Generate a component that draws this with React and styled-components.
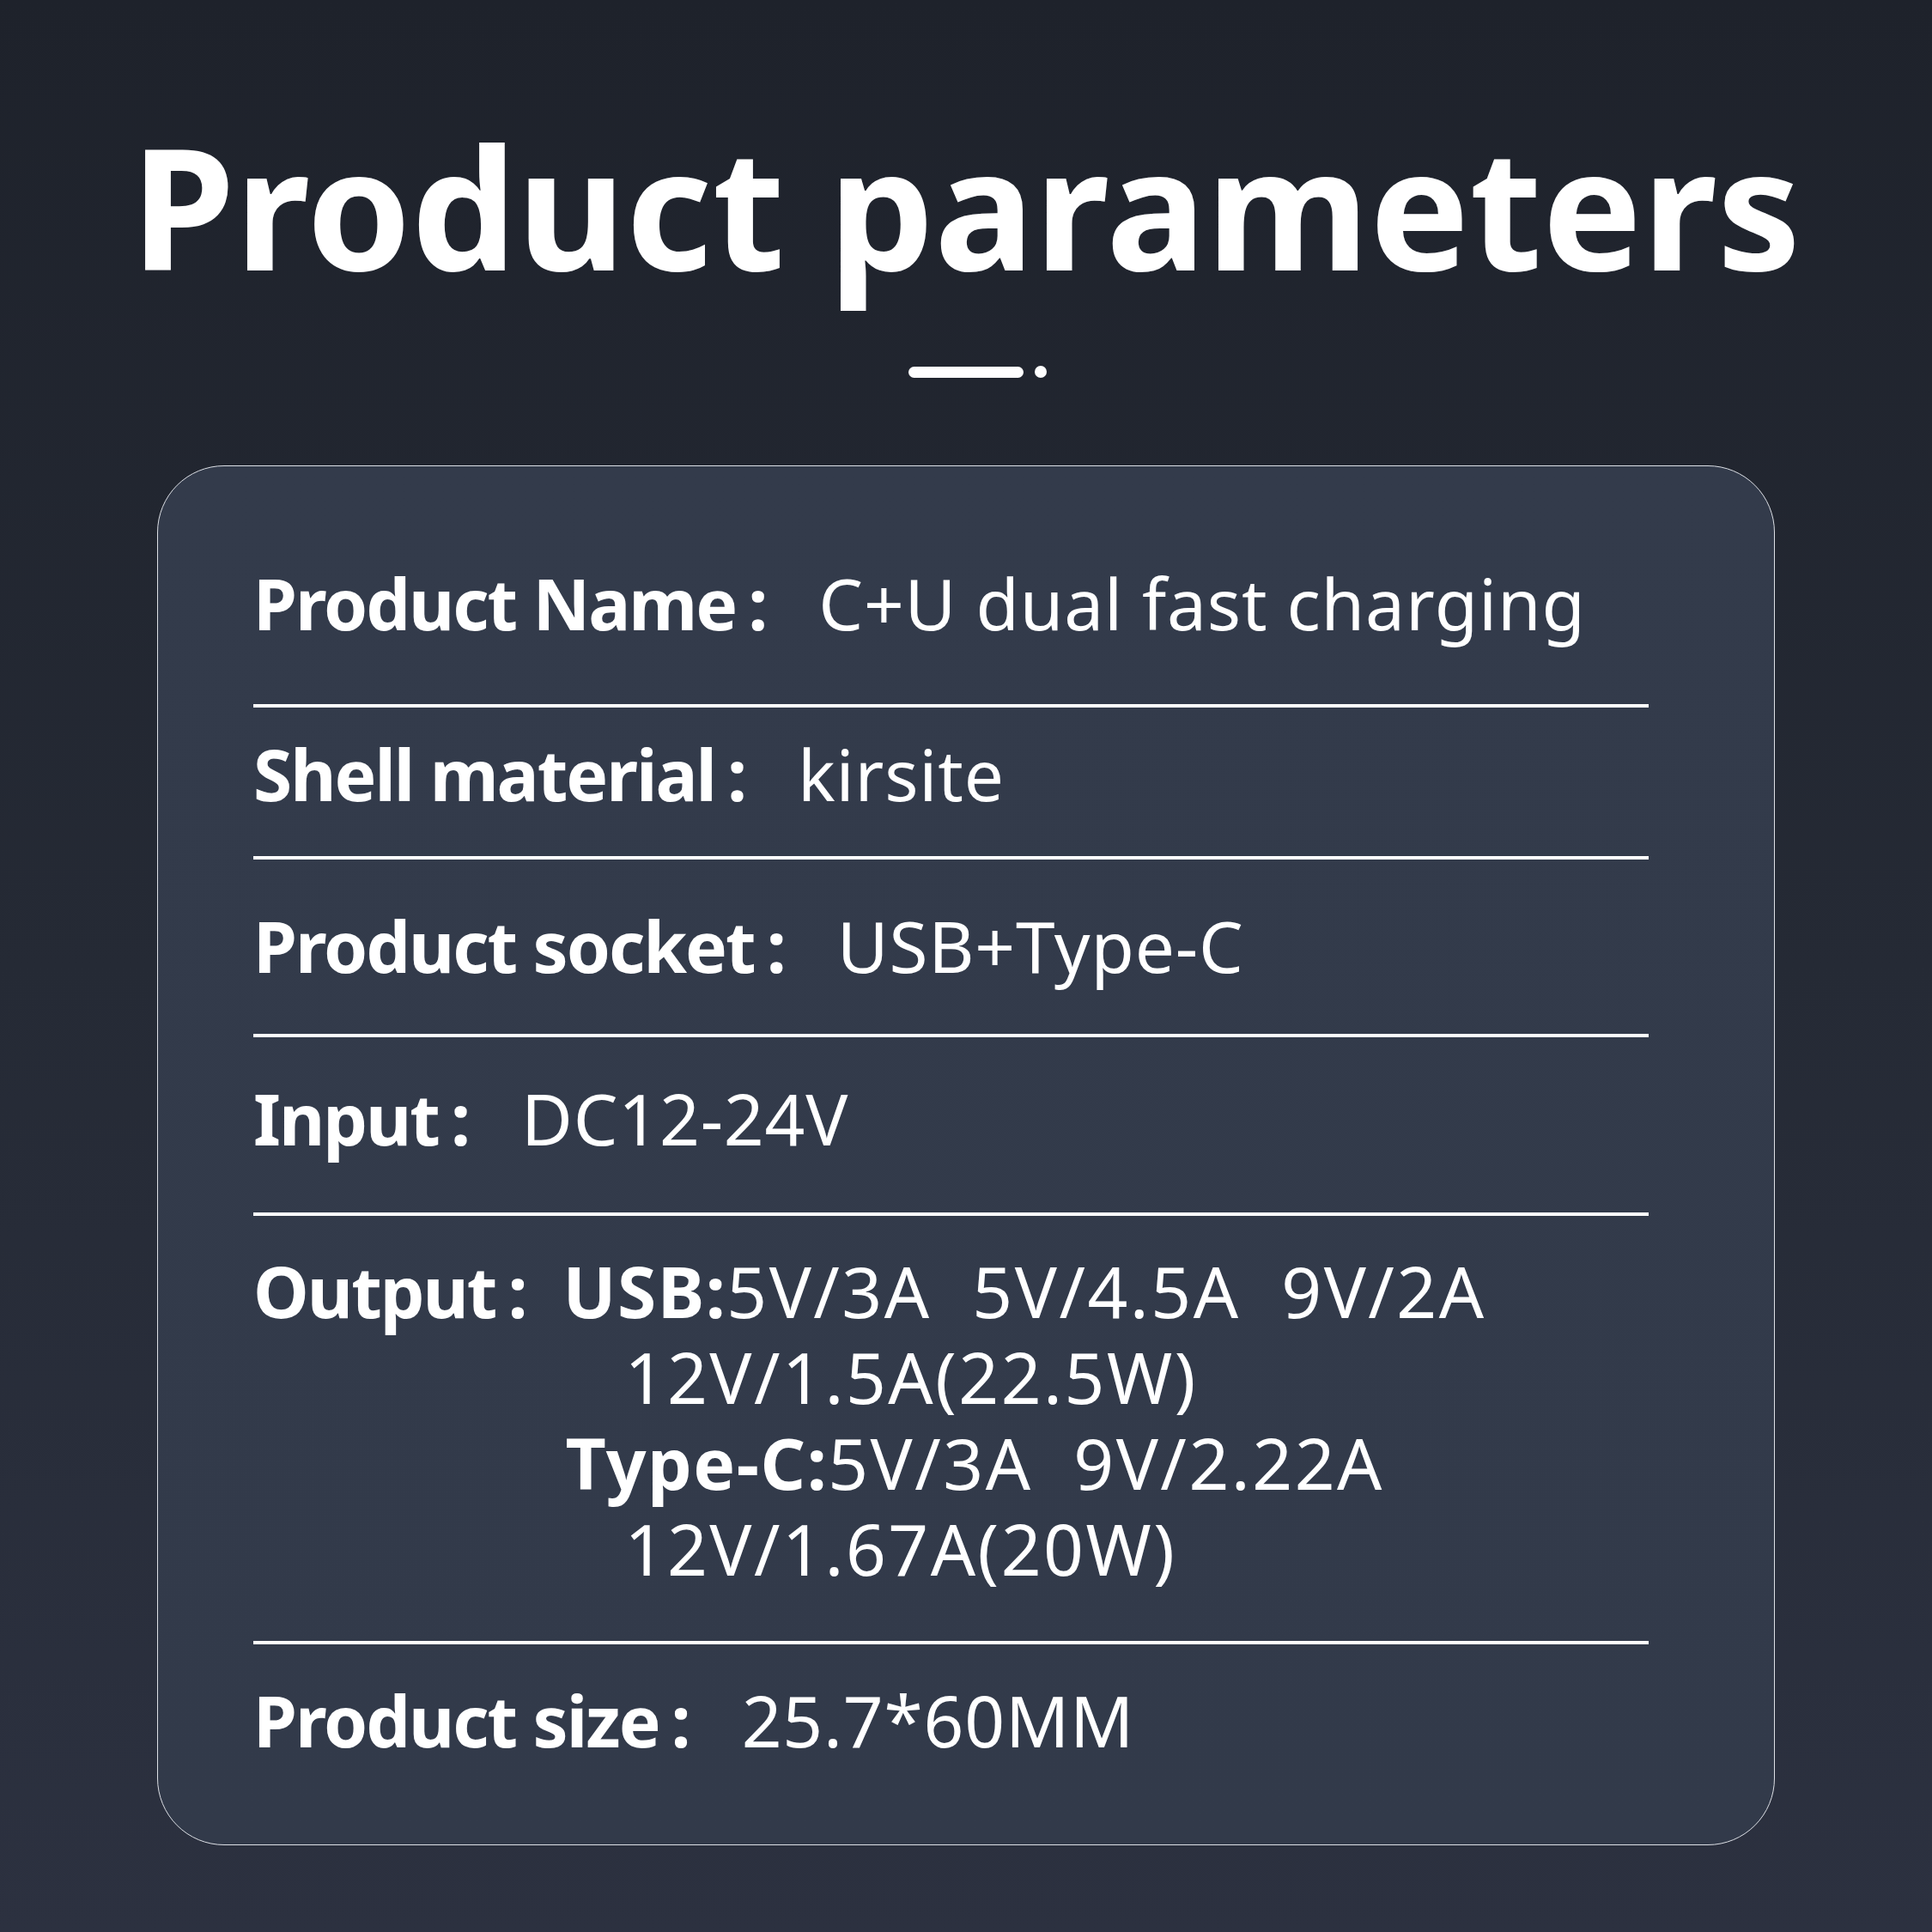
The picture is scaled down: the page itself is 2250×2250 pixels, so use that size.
import styled, { createGlobalStyle } from "styled-components";

const GlobalStyle = createGlobalStyle`
  body {
    margin: 0;
    background: #1f232c;
  }
`;

const Page = styled.div`
  width: 2250px;
  height: 2250px;
  box-sizing: border-box;
  display: flex;
  flex-direction: column;
  align-items: center;
  background: linear-gradient(180deg, #1e222b 0%, #252a35 50%, #2c3140 100%);
  font-family: "Noto Sans", "Noto Sans CJK JP", sans-serif;
  color: #ffffff;
`;

const Title = styled.h1`
  margin: 0;
  padding-top: 142px;
  font-size: 195px;
  line-height: 1;
  font-weight: 700;
  letter-spacing: 0;
`;

const Mark = styled.div`
  display: flex;
  align-items: center;
  gap: 13px;
  margin-top: 89px;
  margin-left: 26px;
`;

const Dash = styled.span`
  width: 134px;
  height: 13px;
  border-radius: 7px;
  background: #ffffff;
`;

const Dot = styled.span`
  width: 14px;
  height: 14px;
  border-radius: 50%;
  background: #ffffff;
`;

const Card = styled.div`
  margin-top: 102px;
  width: 1884px;
  height: 1607px;
  box-sizing: border-box;
  padding: 0 146px 0 111px;
  border: 1.5px solid #dde0e6;
  border-radius: 78px;
  background: linear-gradient(180deg, #333b4b 0%, #323a4a 100%);
`;

const Row = styled.div`
  display: flex;
  align-items: flex-start;
  padding-top: ${(p) => p.$top}px;
  padding-bottom: ${(p) => p.$bottom}px;
  border-bottom: ${(p) => (p.$last ? "none" : "4px solid #ffffff")};
  font-size: 82px;
  line-height: 100px;
`;

const Label = styled.span`
  font-weight: 700;
  letter-spacing: -2px;
  white-space: pre;
`;

const Colon = styled.span`
  font-weight: 700;
  margin-left: 14px;
`;

const Value = styled.span`
  font-weight: 400;
  margin-left: 59px;
  letter-spacing: 0.8px;
  white-space: pre;
`;

const Lines = styled.div`
  display: flex;
  flex-direction: column;
  margin-left: 41px;
`;

const Line = styled.div`
  white-space: pre;
  font-weight: 400;
  letter-spacing: 2.5px;
  padding-left: ${(p) => p.$indent || 0}px;
  b {
    font-weight: 700;
    letter-spacing: 1.5px;
  }
`;

const rows = [
  { label: "Product Name", value: "C+U dual fast charging", top: 109, bottom: 68 },
  { label: "Shell material", value: "kirsite", top: 27, bottom: 46 },
  { label: "Product socket", value: "USB+Type-C", top: 50, bottom: 53 },
  { label: "Input", value: "DC12-24V", top: 44, bottom: 60 },
];

export default function App() {
  return (
    <>
      <GlobalStyle />
      <Page>
        <Title>Product parameters</Title>
        <Mark>
          <Dash />
          <Dot />
        </Mark>
        <Card>
          {rows.map((r) => (
            <Row key={r.label} $top={r.top} $bottom={r.bottom}>
              <Label>{r.label}</Label>
              <Colon>:</Colon>
              <Value>{r.value}</Value>
            </Row>
          ))}
          <Row $top={37} $bottom={58}>
            <Label>Output</Label>
            <Colon>:</Colon>
            <Lines>
              <Line>
                <b>USB:</b>5V/3A  5V/4.5A  9V/2A
              </Line>
              <Line $indent={72}>12V/1.5A(22.5W)</Line>
              <Line $indent={3}>
                <b>Type-C:</b>5V/3A  9V/2.22A
              </Line>
              <Line $indent={72}>12V/1.67A(20W)</Line>
            </Lines>
          </Row>
          <Row $top={38} $bottom={0} $last>
            <Label>Product size</Label>
            <Colon>:</Colon>
            <Value>25.7*60MM</Value>
          </Row>
        </Card>
      </Page>
    </>
  );
}
